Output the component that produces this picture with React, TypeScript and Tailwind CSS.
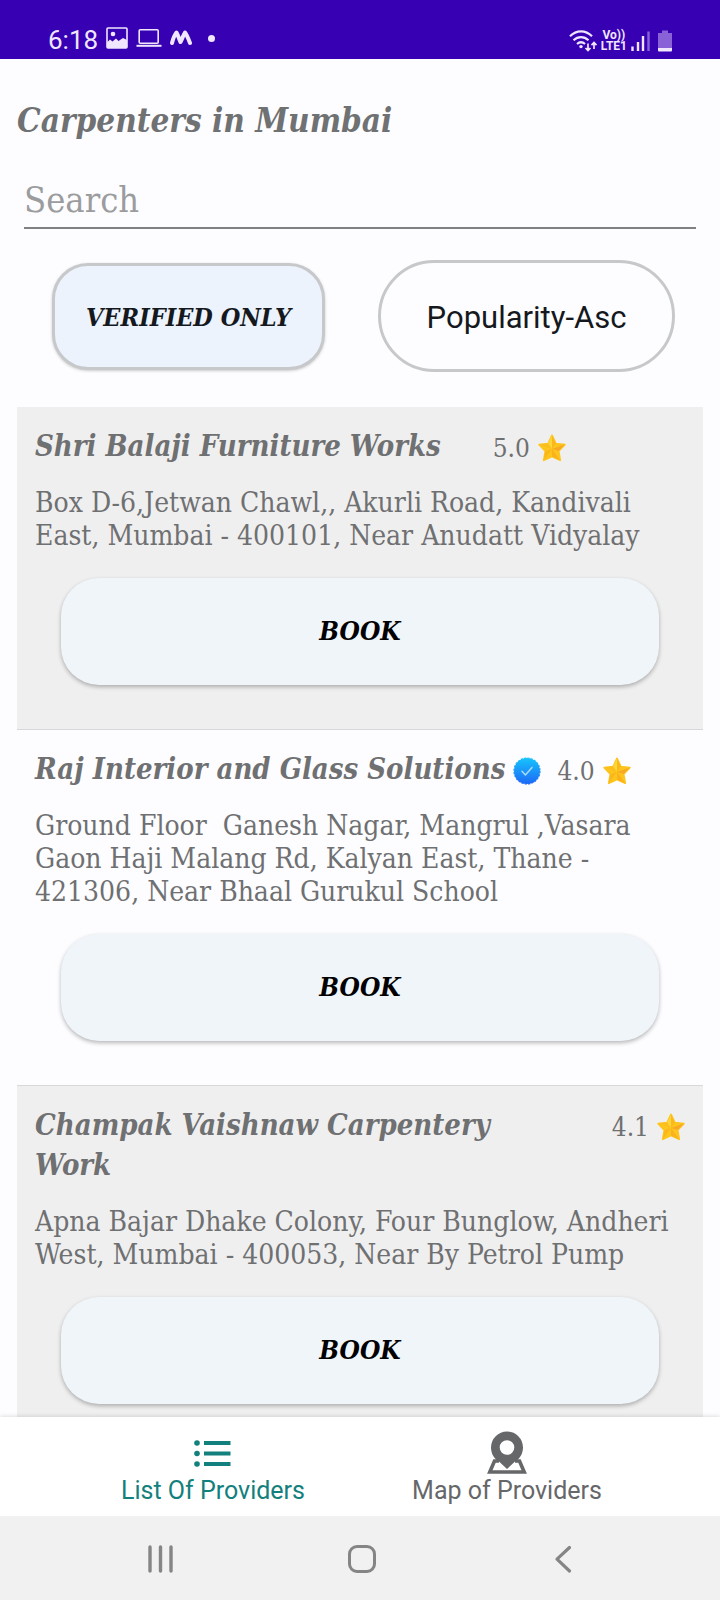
type Provider = {
  name: string
  rating: string
  address: string
  verified: boolean
}

const providers: Provider[] = [
  {
    name: 'Shri Balaji Furniture Works',
    rating: '5.0',
    address: 'Box D-6,Jetwan Chawl,, Akurli Road, Kandivali East, Mumbai - 400101, Near Anudatt Vidyalay',
    verified: false,
  },
  {
    name: 'Raj Interior and Glass Solutions',
    rating: '4.0',
    address:
      'Ground Floor  Ganesh Nagar, Mangrul ,Vasara Gaon Haji Malang Rd, Kalyan East, Thane - 421306, Near Bhaal Gurukul School',
    verified: true,
  },
  {
    name: 'Champak Vaishnaw Carpentery Work',
    rating: '4.1',
    address: 'Apna Bajar Dhake Colony, Four Bunglow, Andheri West, Mumbai - 400053, Near By Petrol Pump',
    verified: false,
  },
]

function Star() {
  return (
    <svg viewBox="0 0 28 28" className="size-7 shrink-0" aria-hidden="true">
      <path
        d="M14 1.5 17.8 9.6 26.8 10.6 20.6 17 22.2 26.2 14 22.5 5.8 26.2 7.4 17 1.2 10.6 10.2 9.6Z"
        fill="#fdc61c"
        stroke="#fdc51c"
        strokeWidth="1.8"
        strokeLinejoin="round"
      />
      <path d="M14 15 14 1.5 17.8 9.6Z" fill="#fbb81c" />
      <path d="M14 15 26.8 10.6 20.6 17Z" fill="#f9a825" />
      <path d="M14 15 22.2 26.2 14 22.5Z" fill="#fbb01e" />
      <path d="M14 15 5.8 26.2 7.4 17Z" fill="#fbb61e" />
      <path d="M14 15 1.2 10.6 10.2 9.6Z" fill="#fcbd1e" />
      <path d="M14 15 10.2 9.6 14 1.5Z" fill="#fed53a" />
    </svg>
  )
}

function VerifiedBadge() {
  return (
    <svg viewBox="0 0 28 28" className="size-7 shrink-0" role="img" aria-label="Verified">
      <defs>
        <linearGradient id="badge" x1="0" y1="0" x2="0" y2="1">
          <stop offset="0" stopColor="#17c3fb" />
          <stop offset="1" stopColor="#1d68f6" />
        </linearGradient>
      </defs>
      <circle cx="14" cy="14" r="13" fill="url(#badge)" />
      <circle cx="14" cy="14" r="13" fill="none" stroke="url(#badge)" strokeWidth="1.2" strokeDasharray="2.2 1.2" />
      <path d="M9 14.2 12.4 18 19 10.4" fill="none" stroke="#a5dcff" strokeWidth="1.5" strokeLinecap="round" strokeLinejoin="round" />
    </svg>
  )
}

function StatusBar() {
  return (
    <header className="flex h-[59px] shrink-0 items-end justify-between bg-[#3700b3] pb-[6px] pl-12 pr-12 font-['Roboto',sans-serif] text-[#f0e6ff]">
      <div className="flex items-center gap-2">
        <span className="pt-1 text-[26px] leading-[26px]">6:18</span>
        <svg viewBox="0 0 22 22" className="size-[22px]" aria-hidden="true">
          <path d="M2 1h18a1 1 0 0 1 1 1v18a1 1 0 0 1-1 1H2a1 1 0 0 1-1-1V2a1 1 0 0 1 1-1Z" fill="none" stroke="currentColor" strokeWidth="1.6" />
          <circle cx="7" cy="7" r="2.3" fill="currentColor" />
          <path d="M1 15.5 4 12.5 6.5 14.5 10 11.5 12.5 14 17 11 21 13V21H1Z" fill="currentColor" />
        </svg>
        <svg viewBox="0 0 26 20" className="h-5 w-[26px]" aria-hidden="true">
          <rect x="3.2" y="1.8" width="19" height="13.5" rx="1" fill="none" stroke="currentColor" strokeWidth="1.6" />
          <path d="M0.5 17.8H25.5" stroke="currentColor" strokeWidth="2" />
        </svg>
        <svg viewBox="0 0 22 16" className="h-4 w-[22px]" aria-hidden="true">
          <path d="M2 13C3 9 4.5 5 6.5 2.5 8 5 9 9 10.500 12 12 9 13.5 5 15 2.5 17 5 18.5 9 20 13" fill="none" stroke="currentColor" strokeWidth="4" strokeLinecap="round" strokeLinejoin="round" />
        </svg>
        <span className="ml-2 size-[7px] rounded-full bg-current" />
      </div>
      <div className="flex items-center">
        <svg viewBox="0 0 30 24" className="h-6 w-[30px]" aria-hidden="true">
          <g fill="none" stroke="currentColor" strokeWidth="2.2">
            <path d="M2 7.2C8.5 0.7 17.5 0.7 24 7.2" />
            <path d="M5.5 11.2C10 7 16 7 20.5 11.2" />
            <path d="M9 15C11.5 12.8 14.5 12.8 17 15" />
          </g>
          <circle cx="13" cy="17.6" r="1.7" fill="currentColor" />
          <path d="M20 14.5v7M17.5 19 20 21.5 22.5 19M26 20v-6M23.5 16.2 26 13.5 28.5 16.2" fill="none" stroke="currentColor" strokeWidth="1.7" />
        </svg>
        <div className="flex flex-col items-center pl-[3px] text-[12px] font-bold leading-[11px]">
          <span>Vo))</span>
          <span>LTE1</span>
        </div>
        <svg viewBox="0 0 20 22" className="ml-[3px] h-[22px] w-5" aria-hidden="true">
          <path d="M2.5 21V16.5M8 21V12M13 21V6" stroke="currentColor" strokeWidth="2.4" />
          <path d="M18.5 21V1.5" stroke="#8a62d8" strokeWidth="2.4" />
        </svg>
        <svg viewBox="0 0 14 22" className="ml-2 h-[22px] w-3.5" aria-hidden="true">
          <path d="M4 0.5H10V3H14V18H0V3H4Z" fill="#8a62d8" />
          <path d="M0 18H14V20.5Q14 21.5 13 21.5H1Q0 21.5 0 20.5Z" fill="currentColor" />
        </svg>
      </div>
    </header>
  )
}

function ProviderCard({ provider }: { provider: Provider }) {
  return (
    <li className="border-b border-[#d7d8da] px-[18px] pb-11 pt-[19px] text-[#6f7072] odd:bg-[#efefef]">
      <div className="flex items-start gap-2">
        <h2 className="max-w-[528px] text-[29px] font-bold italic leading-10">{provider.name}</h2>
        <div className="flex h-10 flex-1 items-center gap-2 pt-1">
          {provider.verified ? <VerifiedBadge /> : <span className="w-7" />}
          <span className="pl-2 text-[26px]">{provider.rating}</span>
          <Star />
        </div>
      </div>
      <p className="mt-5 whitespace-pre-wrap text-[28px] leading-[33px]">{provider.address}</p>
      <div className="mt-[26px] px-[26px]">
        <button
          type="button"
          className="h-[107px] w-full rounded-[38px] bg-[#f0f5fa] text-[26px] font-bold italic text-black shadow-[0_2px_4px_rgba(0,0,0,0.28)]"
        >
          BOOK
        </button>
      </div>
    </li>
  )
}

export default function App() {
  return (
    <div className="flex h-screen flex-col overflow-hidden bg-[#fdfdff] font-['DejaVu_Serif_Condensed','DejaVu_Serif',serif]">
      <StatusBar />
      <main className="flex min-h-0 flex-1 flex-col overflow-hidden px-[17px]">
        <h1 className="pt-[38px] text-[33px] font-bold italic leading-[48px] text-[#6f7173]">Carpenters in Mumbai</h1>
        <div className="mt-[26px] px-[7px]">
          <input
            type="text"
            aria-label="Search"
            placeholder="Search"
            className="block h-[58px] w-full border-b-2 border-[#808183] bg-transparent text-[36px] outline-none placeholder:text-[#9b9c9e]"
          />
        </div>
        <div className="mt-[31px] flex shrink-0 items-center justify-between pl-[35px] pr-7">
          <button
            type="button"
            className="h-[107px] w-[273px] rounded-[36px] border-[3px] border-[#c6c8ca] bg-[#ecf3fd] pt-1 text-[25px] font-bold italic text-[#15191e] shadow-[0_1px_3px_rgba(0,0,0,0.2)]"
          >
            VERIFIED ONLY
          </button>
          <button
            type="button"
            className="h-[112px] w-[297px] rounded-full border-[3px] border-[#c6c8ca] pt-1 font-['Roboto',sans-serif] text-[31px] text-[#15191e]"
          >
            Popularity-Asc
          </button>
        </div>
        <ul className="mt-[35px] min-h-0 flex-1 overflow-hidden">
          {providers.map((p) => (
            <ProviderCard key={p.name} provider={p} />
          ))}
        </ul>
      </main>
      <nav className="flex h-[99px] shrink-0 justify-center bg-white pt-[14px] font-['Roboto',sans-serif] text-[25px] leading-7 shadow-[0_-1px_4px_rgba(0,0,0,0.12)]">
        <a href="#list" className="flex w-[294px] flex-col items-center gap-[2px] text-[#12807c]">
          <svg viewBox="0 0 44 44" className="size-11" aria-hidden="true">
            <g fill="currentColor">
              <circle cx="6" cy="12" r="2.8" />
              <circle cx="6" cy="22.5" r="2.8" />
              <circle cx="6" cy="33" r="2.8" />
              <path d="M13 10H39.500V14H13ZM13 20.5H39.500V24.5H13ZM13 31H39.500V35H13Z" />
            </g>
          </svg>
          List Of Providers
        </a>
        <a href="#map" className="flex w-[294px] flex-col items-center gap-[2px] text-[#666769]">
          <svg viewBox="0 0 44 44" className="size-11" aria-hidden="true">
            <path d="M14 30H9.5L4.8 41H39.2L34.500 30H30" fill="none" stroke="currentColor" strokeWidth="3.6" />
            <path
              fillRule="evenodd"
              d="M22 0.5A16 16 0 0 1 38 16.5C38 23 34.5 28 30 30.5L22 38 14 30.5C9.5 28 6 23 6 16.5A16 16 0 0 1 22 0.5ZM22 9.2A7.3 7.3 0 1 0 22 23.8 7.3 7.3 0 1 0 22 9.2Z"
              fill="currentColor"
            />
          </svg>
          Map of Providers
        </a>
      </nav>
      <footer className="flex h-[84px] shrink-0 items-center justify-between bg-[#f1f1f1] pl-[142px] pr-[138px] text-[#858585]">
        <button type="button" aria-label="Recent apps">
          <svg viewBox="0 0 36 36" className="size-9" aria-hidden="true">
            <path d="M8 7V31M18.5 7V31M29 7V31" stroke="currentColor" strokeWidth="3.4" strokeLinecap="round" />
          </svg>
        </button>
        <button type="button" aria-label="Home">
          <svg viewBox="0 0 36 36" className="size-9" aria-hidden="true">
            <rect x="5.5" y="6.5" width="25" height="25" rx="7.5" fill="none" stroke="currentColor" strokeWidth="3" />
          </svg>
        </button>
        <button type="button" aria-label="Back">
          <svg viewBox="0 0 36 36" className="size-9" aria-hidden="true">
            <path d="M23.5 7.5 11 19.2 23.5 31" fill="none" stroke="currentColor" strokeWidth="3.2" strokeLinecap="round" strokeLinejoin="round" />
          </svg>
        </button>
      </footer>
    </div>
  )
}
